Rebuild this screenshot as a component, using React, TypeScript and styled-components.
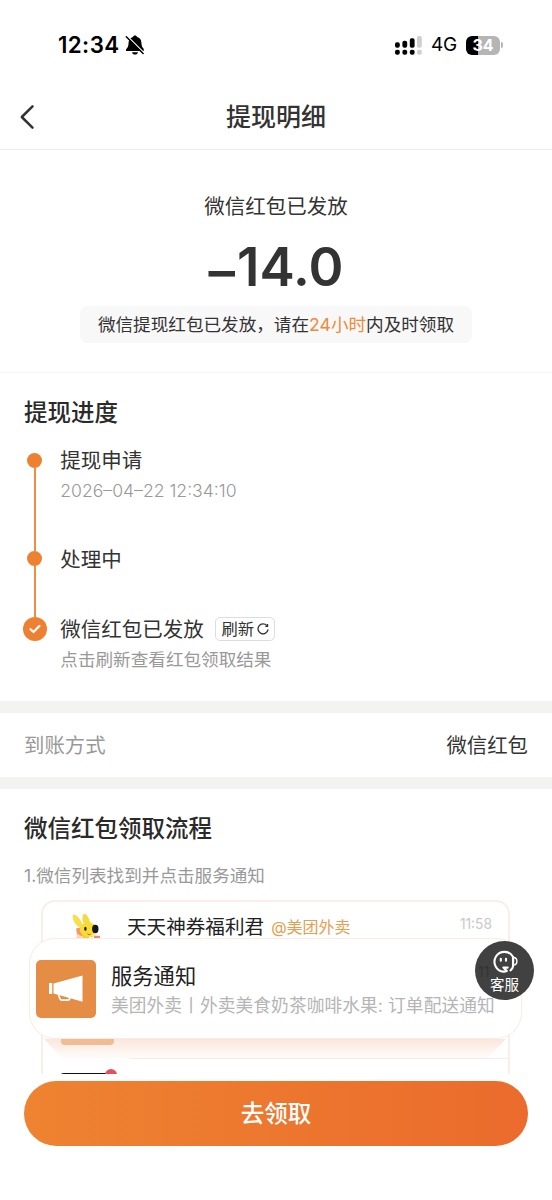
import React from 'react';
import styled, { createGlobalStyle } from 'styled-components';

const GlobalStyle = createGlobalStyle`
  * { box-sizing: border-box; }
  body {
    margin: 0;
    background: #fff;
    color: #333;
    font-family: Inter, 'Noto Sans CJK SC', sans-serif;
  }
`;

const Screen = styled.div`
  width: 552px;
  height: 1200px;
  display: flex;
  flex-direction: column;
  overflow: hidden;
  background: #fff;
`;

const StatusBar = styled.header`
  height: 84px;
  flex: none;
  display: flex;
  justify-content: space-between;
  padding: 31px 49px 0 58px;
  color: #000;
`;

const StatusGroup = styled.div<{ $gap: number }>`
  display: flex;
  align-items: center;
  gap: ${(p) => p.$gap}px;
  height: 28px;
`;

const Clock = styled.span`
  font-size: 22.3px;
  font-weight: 600;
  letter-spacing: 0.4px;
  line-height: 28px;
`;

const Network = styled.span`
  font-size: 19px;
  font-weight: 400;
  line-height: 30px;
  letter-spacing: -0.2px;
`;

const BatteryWrap = styled.div`
  display: flex;
  align-items: center;
  gap: 1px;
`;

const Battery = styled.div`
  width: 34px;
  height: 19px;
  border-radius: 6px;
  background: linear-gradient(90deg, #000 12px, #b5b5b5 12px);
  color: #fff;
  font-size: 16px;
  font-weight: 700;
  line-height: 19px;
  text-align: center;
`;

const BatteryTip = styled.div`
  width: 2px;
  height: 6px;
  border-radius: 0 2px 2px 0;
  background: #b5b5b5;
`;

const NavBar = styled.nav`
  height: 66px;
  flex: none;
  display: grid;
  grid-template-columns: 60px 1fr 60px;
  align-items: center;
  border-bottom: 1px solid #ebebeb;
`;

const BackButton = styled.button`
  display: flex;
  padding: 0 0 0 19px;
  border: 0;
  background: none;
`;

const NavTitle = styled.h1`
  margin: 0;
  padding-top: 1px;
  font-size: 25px;
  font-weight: 500;
  line-height: 36px;
  text-align: center;
`;

const Summary = styled.section`
  height: 223px;
  flex: none;
  display: flex;
  flex-direction: column;
  align-items: center;
  padding-top: 42px;
  border-bottom: 1px solid #f5f5f5;
`;

const SummaryLabel = styled.div`
  font-size: 20.5px;
  line-height: 30px;
`;

const Amount = styled.div`
  display: flex;
  margin-top: 15px;
  font-size: 53px;
  font-weight: 600;
  line-height: 60px;
`;

const MinusSign = styled.span`
  margin-right: 2px;
  padding-top: 4px;
`;

const Notice = styled.div`
  width: 392px;
  height: 37px;
  margin-top: 5px;
  border-radius: 8px;
  background: #f8f8f8;
  font-size: 17.6px;
  line-height: 38px;
  text-align: center;
  white-space: nowrap;
`;

const Highlight = styled.span`
  color: #ed8a3c;
`;

const Section = styled.section<{ $height: number }>`
  height: ${(p) => p.$height}px;
  flex: none;
  padding: 0 24px;
`;

const SectionTitle = styled.h2`
  margin: 0;
  padding-top: 22px;
  font-size: 23.5px;
  font-weight: 500;
  line-height: 36px;
  color: #2a2a2a;
`;

const Steps = styled.ol`
  margin: 14px 0 0 -0.7px;
  padding: 0;
  list-style: none;
`;

const Step = styled.li<{ $height: number }>`
  display: flex;
  height: ${(p) => p.$height}px;
`;

const Rail = styled.div`
  width: 23px;
  flex: none;
  margin-right: 14px;
  display: flex;
  flex-direction: column;
  align-items: center;
`;

const RailLine = styled.div<{ $height?: number; $hidden?: boolean }>`
  width: 2px;
  flex: ${(p) => (p.$height ? 'none' : 1)};
  height: ${(p) => (p.$height ? `${p.$height}px` : 'auto')};
  background: ${(p) => (p.$hidden ? 'transparent' : '#f08c45')};
`;

const Dot = styled.div`
  width: 15px;
  height: 15px;
  flex: none;
  border-radius: 50%;
  background: #ed8131;
`;

const DoneDot = styled.div`
  width: 24px;
  height: 24px;
  flex: none;
  display: flex;
  align-items: center;
  justify-content: center;
  border-radius: 50%;
  background: #ed8131;
`;

const StepTitle = styled.div`
  display: flex;
  align-items: center;
  height: 30px;
  padding-top: 2px;
  font-size: 20.5px;
  line-height: 30px;
`;

const StepNote = styled.div`
  margin-top: 1px;
  font-size: 17.6px;
  line-height: 30px;
  color: #999;
  white-space: nowrap;
`;

const StepTime = styled(StepNote)`
  font-size: 17.6px;
  font-weight: 300;
`;

const RefreshButton = styled.button`
  width: 60px;
  height: 24px;
  margin: -2px 0 0 11.500px;
  padding: 0;
  display: flex;
  align-items: center;
  justify-content: center;
  gap: 3px;
  border: 1px solid #ddd;
  border-radius: 5px;
  background: #fff;
  color: #333;
  font-family: inherit;
  font-size: 16.3px;
  line-height: 22px;
`;

const Divider = styled.div`
  height: 12px;
  flex: none;
  background: #f3f3f1;
`;

const MethodRow = styled.div`
  height: 64px;
  flex: none;
  display: flex;
  align-items: center;
  justify-content: space-between;
  padding: 0 24px 2px;
  font-size: 20.4px;
`;

const Muted = styled.span`
  color: #999;
`;

const Guide = styled(Section)`
  position: relative;
  overflow: hidden;
`;

const GuideStep = styled.p`
  margin: 14px 0 0;
  font-size: 17.6px;
  line-height: 30px;
  color: #999;
`;

const ChatList = styled.div`
  width: 469px;
  height: 200px;
  margin: 9px 0 0 17px;
  border: 2px solid #faeee8;
  border-radius: 14px;
  background: #fff;
`;

const ChatRow = styled.div`
  height: 36px;
  display: flex;
  align-items: center;
  padding: 14px 16px 0 29px;
`;

const ChatName = styled.span`
  margin-left: 26px;
  font-size: 19.6px;
  line-height: 28px;
  color: #222;
`;

const ChatOrg = styled.span`
  margin-left: 7px;
  flex: 1;
  font-size: 16px;
  line-height: 28px;
  color: #e4a050;
`;

const ChatTime = styled.span`
  margin-top: -6px;
  font-size: 13.8px;
  color: #c8c8c8;
`;

const ServiceCard = styled.div`
  width: 493px;
  height: 101px;
  margin-left: -14px;
  display: flex;
  align-items: center;
  padding: 1px 0 0 6px;
  border: 1.5px solid #fbebe2;
  border-radius: 26px;
  background: #fff;
  position: relative;
`;

const ServiceIcon = styled.div`
  width: 60px;
  height: 58px;
  display: flex;
  flex: none;
  align-items: center;
  justify-content: center;
  border-radius: 5px;
  background: #e58c45;
`;

const ServiceText = styled.div`
  margin-left: 15px;
  padding-top: 3px;
  white-space: nowrap;
`;

const ServiceName = styled.div`
  font-size: 21.3px;
  line-height: 30px;
  color: #222;
`;

const ServiceDesc = styled.div`
  font-size: 17.7px;
  letter-spacing: 0.1px;
  line-height: 29px;
  color: #b5b5b5;
`;

const CardShade = styled.div`
  height: 19px;
  margin: 0 2px 0 1px;
  background: linear-gradient(180deg, #fbe6dc, #fffaf7 90%);
  clip-path: polygon(0 0, 100% 0, 96% 100%, 4% 100%);
`;

const ShadeTile = styled.div`
  width: 53px;
  height: 6px;
  margin-left: 17px;
  border-radius: 0 0 4px 4px;
  background: #f1bc94;
`;

const RowRule = styled.div`
  height: 1px;
  margin-left: 86px;
  background: #f3eeec;
`;

const NextAvatar = styled.div`
  width: 58px;
  height: 12px;
  margin: 10px 0 0 17px;
  display: flex;
  align-items: flex-start;
`;

const AvatarEdge = styled.div`
  width: 47px;
  height: 8px;
  margin-top: 4px;
  flex: none;
  border-radius: 4px 0 0 0;
  background: #111;
`;

const UnreadDot = styled.div`
  width: 12px;
  height: 12px;
  margin-left: -2px;
  flex: none;
  border-radius: 50%;
  background: #e5505a;
`;

const SupportButton = styled.button`
  position: absolute;
  top: 152px;
  right: 18px;
  width: 59px;
  height: 59px;
  padding: 8px 0 0;
  display: flex;
  flex-direction: column;
  align-items: center;
  border: 0;
  border-radius: 50%;
  background: #414141;
  color: #fff;
  font-family: inherit;
  font-size: 14.5px;
  line-height: 22px;
`;

const CoveredTime = styled.span`
  position: absolute;
  left: 3px;
  top: 20px;
  font-size: 14px;
  color: #333;
`;

const BottomBar = styled.footer`
  flex: 1;
  padding: 7px 24px 0;
  background: #fff;
`;

const ClaimButton = styled.button`
  display: block;
  width: 504px;
  height: 65px;
  padding: 0;
  border: 0;
  border-radius: 33px;
  background: linear-gradient(90deg, #ee8331, #eb6b2c);
  color: #fff;
  font-family: inherit;
  font-size: 23.5px;
  font-weight: 500;
  line-height: 66px;
`;

const BellOffIcon = () => (
  <svg width="20" height="20" viewBox="0 0 20 20">
    <path d="M10 .4c1.100 0 1.900.6 2.100 1.500 2.700.8 4.200 2.800 4.300 5.500.1 3.400.9 4.900 2.300 6.400v2.200H1v-1.500c1.800-1.800 2.500-3.300 2.600-6.900.1-2.900 1.700-4.900 4.300-5.700C8.100 1 8.900.4 10 .4z" fill="#000" />
    <path d="M7 17.200h6c-.3 1.500-1.500 2.400-3 2.400s-2.700-.9-3-2.400z" fill="#000" />
    <path d="M2.400 1.300l17 17" stroke="#fff" strokeWidth="1.300" />
    <path d="M1.300 1.800l16.800 16.700" stroke="#000" strokeWidth="1.500" strokeLinecap="round" />
  </svg>
);

const SignalIcon = () => (
  <svg width="27" height="19" viewBox="0 0 27 19">
    <g fill="#000">
      <rect x="0" y="6.2" width="4.8" height="5.6" rx="2" />
      <rect x="7.4" y="4.8" width="4.8" height="7" rx="2" />
      <rect x="14.8" y="2.3" width="4.8" height="9.5" rx="1.8" />
      <rect x="0" y="13.8" width="4.8" height="5" rx="2" />
      <rect x="7.4" y="13.8" width="4.8" height="5" rx="2" />
      <rect x="14.8" y="13.8" width="4.8" height="5" rx="2" />
    </g>
    <g fill="#cfcfcf">
      <rect x="22" y="0" width="4.8" height="11.8" rx="1.8" />
      <rect x="22" y="13.8" width="4.8" height="5" rx="2" />
    </g>
  </svg>
);

const BackIcon = () => (
  <svg width="16" height="26" viewBox="0 0 16 26" fill="none">
    <path d="M13.500 2.300L2.800 13l10.700 10.700" stroke="#333" strokeWidth="2.500" strokeLinecap="round" strokeLinejoin="round" />
  </svg>
);

const CheckIcon = () => (
  <svg width="12" height="10" viewBox="0 0 12 10" fill="none">
    <path d="M1.500 5.200l3 2.800L10.400 2" stroke="#fff" strokeWidth="2.200" strokeLinecap="round" strokeLinejoin="round" />
  </svg>
);

const RefreshIcon = () => (
  <svg width="12" height="12" viewBox="0 0 12 12" fill="none">
    <path d="M9.800 2.500A5 5 0 1 0 10.900 7" stroke="#333" strokeWidth="1.300" strokeLinecap="round" />
    <path d="M8.300 3.500h2.300V.900" stroke="#333" strokeWidth="1.200" />
  </svg>
);

const Mascot = () => (
  <svg width="29" height="26" viewBox="0 0 29 26">
    <path d="M4 26c0-3 2-5 5-5h8c3 0 5 2 6 5z" fill="#f6cd2c" />
    <path d="M4.500 20l6 2 1.500 4H5z" fill="#f4d9b5" />
    <path d="M4 14.500l7-1.500 2 5-3 4-5-2z" fill="#f19a68" />
    <ellipse cx="5.300" cy="7" rx="3.100" ry="7.400" transform="rotate(-32 5.300 7)" fill="#f7e04a" />
    <ellipse cx="14.300" cy="7" rx="3.300" ry="7.400" transform="rotate(-18 14.300 7)" fill="#f5dc3c" />
    <ellipse cx="16" cy="15.500" rx="8.200" ry="7.600" fill="#f7dc38" />
    <ellipse cx="13.400" cy="14.800" rx="1.200" ry="2.100" fill="#222" />
    <ellipse cx="23.300" cy="15" rx="3.200" ry="4.200" fill="#15151d" />
    <path d="M15.500 19.800c.8.900 2 1 3.200.3" stroke="#b05b25" strokeWidth="1" fill="none" />
    <path d="M17 22.500l5 1V26h-5z" fill="#fff" />
    <path d="M22 21.500l6 .5v4h-6z" fill="#ef8d5d" />
  </svg>
);

const MegaphoneIcon = () => (
  <svg width="36" height="30" viewBox="0 0 36 30" fill="none">
    <path d="M5.500 9.600L34.500 1.500v26.300L5.500 19.500z" fill="#fff" />
    <rect x="1" y="9" width="3.200" height="11" fill="#fff" />
    <path d="M10.500 20.500l1.300 4c.4 1.200 1.100 1.700 2.200 1.700h6c1.300 0 1.900-.9 1.500-2.200l-.4-1" stroke="#fff" strokeWidth="1.700" />
  </svg>
);

const SupportIcon = () => (
  <svg width="26" height="25" viewBox="0 0 26 25" fill="none">
    <path d="M20.800 7.500A9.900 9.900 0 1 0 11.500 22.600c1.300 0 2.500-.2 3.300-.7l-3.400-3.300h4.300" stroke="#fff" strokeWidth="2.100" strokeLinecap="round" strokeLinejoin="round" />
    <path d="M21 8v9.500c-.3 1.600-1.200 2.900-2.500 3.900" stroke="#fff" strokeWidth="2.100" strokeLinecap="round" />
    <path d="M21.500 8.500c2.300.1 3.400 1.400 3.400 3.700s-1.100 3.700-3.400 3.900z" stroke="#fff" strokeWidth="1.400" />
    <path d="M8.800 9.800v2M14 9.800v2" stroke="#fff" strokeWidth="2.100" strokeLinecap="round" />
  </svg>
);

export default function App() {
  return (
    <>
      <GlobalStyle />
      <Screen>
        <StatusBar>
          <StatusGroup $gap={6}>
            <Clock>12:34</Clock>
            <BellOffIcon />
          </StatusGroup>
          <StatusGroup $gap={9}>
            <SignalIcon />
            <Network>4G</Network>
            <BatteryWrap>
              <Battery>34</Battery>
              <BatteryTip />
            </BatteryWrap>
          </StatusGroup>
        </StatusBar>

        <NavBar>
          <BackButton aria-label="返回">
            <BackIcon />
          </BackButton>
          <NavTitle>提现明细</NavTitle>
        </NavBar>

        <Summary>
          <SummaryLabel>微信红包已发放</SummaryLabel>
          <Amount>
            <MinusSign>–</MinusSign>14.0
          </Amount>
          <Notice>
            微信提现红包已发放，请在<Highlight>24小时</Highlight>内及时领取
          </Notice>
        </Summary>

        <Section $height={328}>
          <SectionTitle>提现进度</SectionTitle>
          <Steps>
            <Step $height={99}>
              <Rail>
                <RailLine $height={8} $hidden />
                <Dot />
                <RailLine />
              </Rail>
              <div>
                <StepTitle>提现申请</StepTitle>
                <StepTime>2026–04–22 12:34:10</StepTime>
              </div>
            </Step>
            <Step $height={70}>
              <Rail>
                <RailLine $height={7} />
                <Dot />
                <RailLine />
              </Rail>
              <StepTitle>处理中</StepTitle>
            </Step>
            <Step $height={62}>
              <Rail>
                <RailLine $height={3} />
                <DoneDot>
                  <CheckIcon />
                </DoneDot>
              </Rail>
              <div>
                <StepTitle>
                  微信红包已发放
                  <RefreshButton>
                    刷新
                    <RefreshIcon />
                  </RefreshButton>
                </StepTitle>
                <StepNote>点击刷新查看红包领取结果</StepNote>
              </div>
            </Step>
          </Steps>
        </Section>

        <Divider />
        <MethodRow>
          <Muted>到账方式</Muted>
          <span>微信红包</span>
        </MethodRow>
        <Divider />

        <Guide $height={285}>
          <SectionTitle>微信红包领取流程</SectionTitle>
          <GuideStep>1.微信列表找到并点击服务通知</GuideStep>
          <ChatList>
            <ChatRow>
              <Mascot />
              <ChatName>天天神券福利君</ChatName>
              <ChatOrg>@美团外卖</ChatOrg>
              <ChatTime>11:58</ChatTime>
            </ChatRow>
            <ServiceCard>
              <ServiceIcon>
                <MegaphoneIcon />
              </ServiceIcon>
              <ServiceText>
                <ServiceName>服务通知</ServiceName>
                <ServiceDesc>美团外卖丨外卖美食奶茶咖啡水果: 订单配送通知</ServiceDesc>
              </ServiceText>
            </ServiceCard>
            <CardShade>
              <ShadeTile />
            </CardShade>
            <RowRule />
            <NextAvatar>
              <AvatarEdge />
              <UnreadDot />
            </NextAvatar>
          </ChatList>
          <SupportButton>
            <CoveredTime>11</CoveredTime>
            <SupportIcon />
            客服
          </SupportButton>
        </Guide>

        <BottomBar>
          <ClaimButton>去领取</ClaimButton>
        </BottomBar>
      </Screen>
    </>
  );
}
